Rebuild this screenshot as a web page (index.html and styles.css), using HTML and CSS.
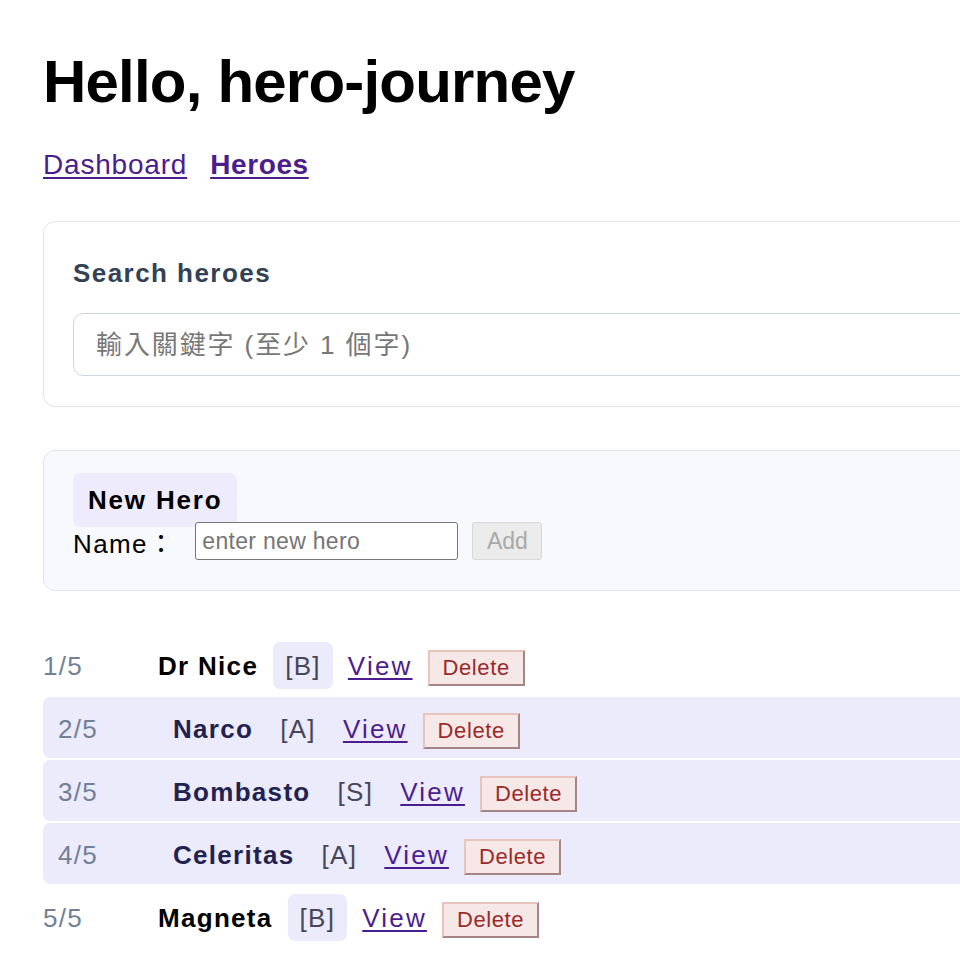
FILE: index.html
```html
<!DOCTYPE html>
<html lang="zh-Hant">
<head>
<meta charset="utf-8">
<title>Hello, hero-journey</title>
<link rel="stylesheet" href="styles.css">
</head>
<body>
<div class="page">
  <h1 class="title">Hello, hero-journey</h1>
  <nav class="nav">
    <a href="#" class="nav-link">Dashboard</a>
    <a href="#" class="nav-link active">Heroes</a>
  </nav>

  <section class="card search-card">
    <label class="search-label" for="q">Search heroes</label>
    <input id="q" class="search-input" type="text" placeholder="輸入關鍵字 (至少 1 個字)">
  </section>

  <section class="card new-card">
    <h2 class="new-title">New Hero</h2>
    <div class="new-row">
      <label class="name-label" for="n">Name：</label>
      <input id="n" class="name-input" type="text" placeholder="enter new hero">
      <button class="add-btn" disabled>Add</button>
    </div>
  </section>

  <ul class="hero-list">
    <li class="hero-row">
      <span class="hero-count">1/5</span>
      <span class="hero-name">Dr Nice</span>
      <span class="hero-rank">[B]</span>
      <a href="#" class="hero-view">View</a>
      <button class="hero-delete">Delete</button>
    </li>
    <li class="hero-row hl">
      <span class="hero-count">2/5</span>
      <span class="hero-name">Narco</span>
      <span class="hero-rank">[A]</span>
      <a href="#" class="hero-view">View</a>
      <button class="hero-delete">Delete</button>
    </li>
    <li class="hero-row hl">
      <span class="hero-count">3/5</span>
      <span class="hero-name">Bombasto</span>
      <span class="hero-rank">[S]</span>
      <a href="#" class="hero-view">View</a>
      <button class="hero-delete">Delete</button>
    </li>
    <li class="hero-row hl">
      <span class="hero-count">4/5</span>
      <span class="hero-name">Celeritas</span>
      <span class="hero-rank">[A]</span>
      <a href="#" class="hero-view">View</a>
      <button class="hero-delete">Delete</button>
    </li>
    <li class="hero-row">
      <span class="hero-count">5/5</span>
      <span class="hero-name">Magneta</span>
      <span class="hero-rank">[B]</span>
      <a href="#" class="hero-view">View</a>
      <button class="hero-delete">Delete</button>
    </li>
  </ul>
</div>
</body>
</html>
```

FILE: styles.css
```css
html, body {
  margin: 0;
  padding: 0;
  overflow: hidden;
  background: #ffffff;
}

body {
  font-family: "Liberation Sans", "Noto Sans CJK TC", sans-serif;
  font-size: 26px;
  letter-spacing: 1.3px;
  color: #000000;
}

.page {
  width: 1100px;
  padding: 46px 0 0 43px;
}

.title {
  margin: 0;
  font-size: 60px;
  line-height: 72px;
  font-weight: 700;
  letter-spacing: -0.8px;
}

.nav {
  display: flex;
  gap: 23px;
  margin-top: 30px;
  font-size: 28px;
  line-height: 34px;
  letter-spacing: 0.8px;
}

.nav-link {
  color: #4c1d8f;
  text-decoration: underline;
  text-decoration-thickness: 2px;
  text-underline-offset: 3px;
}

.nav-link.active {
  font-weight: 700;
  letter-spacing: 0.6px;
}

.card {
  border: 1px solid #e3e4ee;
  border-radius: 12px;
}

.search-card {
  margin-top: 39px;
  padding: 35px 29px 30px;
  background: #ffffff;
  display: flex;
  flex-direction: column;
}

.search-label {
  font-size: 26px;
  line-height: 32px;
  font-weight: 700;
  color: #334155;
  letter-spacing: 1.45px;
}

.search-input {
  margin-top: 24px;
  box-sizing: border-box;
  height: 63px;
  width: 100%;
  padding: 2px 22px 0;
  border: 1px solid #cdd5e0;
  border-radius: 10px;
  font-family: "Liberation Sans", "Noto Sans CJK TC", sans-serif;
  font-size: 26px;
  letter-spacing: 1.9px;
  color: #222;
  background: #ffffff;
  outline: none;
}

.search-input::placeholder {
  color: #777777;
}

.new-card {
  margin-top: 43px;
  padding: 22px 29px 30px;
  background: #f8f9fe;
}

.new-title {
  display: inline-block;
  margin: 0;
  padding: 12px 15px 11px;
  font-size: 26px;
  line-height: 31px;
  font-weight: 700;
  letter-spacing: 1.8px;
  background: #edebfc;
  border-radius: 7px;
}

.new-row {
  display: flex;
  align-items: center;
  margin-top: -5px;
}

.name-label {
  font-size: 26px;
  margin-right: 20px;
  letter-spacing: 1.4px;
}

.name-input {
  box-sizing: border-box;
  width: 263px;
  height: 38px;
  padding: 0 6px;
  border: 1px solid #767676;
  border-radius: 3px;
  font-family: "Liberation Sans", sans-serif;
  font-size: 23px;
  letter-spacing: 0.3px;
  background: #ffffff;
}

.name-input::placeholder {
  color: #757575;
}

.add-btn {
  box-sizing: border-box;
  margin-left: 14px;
  width: 70px;
  height: 38px;
  padding: 0;
  border: 1px solid #d8d8d8;
  border-radius: 3px;
  background: #ebebec;
  color: #a8a8a8;
  font-family: "Liberation Sans", sans-serif;
  font-size: 23px;
}

.hero-list {
  list-style: none;
  margin: 43px 0 0;
  padding: 0;
  display: flex;
  flex-direction: column;
  gap: 2px;
}

.hero-row {
  box-sizing: border-box;
  display: flex;
  align-items: baseline;
  gap: 15px;
  height: 61px;
  padding: 8px 0 0;
  border-radius: 7px;
}

.hero-row.hl {
  background: #ecebfc;
  padding-left: 15px;
}

.hero-count {
  width: 100px;
  color: #718096;
}

.hero-name {
  font-weight: 700;
  color: #000000;
  letter-spacing: 1.3px;
}

.hero-row.hl .hero-name {
  color: #23224f;
}

.hero-rank {
  padding: 11px 12px 9px;
  line-height: 27px;
  border-radius: 7px;
  background: #ecebfc;
  color: #474759;
}

.hero-row.hl .hero-rank {
  background: transparent;
}

.hero-view {
  color: #4c1d8f;
  text-decoration: underline;
  text-decoration-thickness: 2px;
  text-underline-offset: 3px;
  letter-spacing: 2.2px;
}

.hero-delete {
  box-sizing: border-box;
  height: 36px;
  padding: 0 13px;
  border: 2px solid;
  border-color: #e8c4bd #a48585 #a48585 #e8c4bd;
  border-radius: 0;
  background: #f6e8e6;
  color: #9b2a2a;
  font-family: "Liberation Sans", sans-serif;
  font-size: 22px;
  letter-spacing: 0.6px;
}
```
